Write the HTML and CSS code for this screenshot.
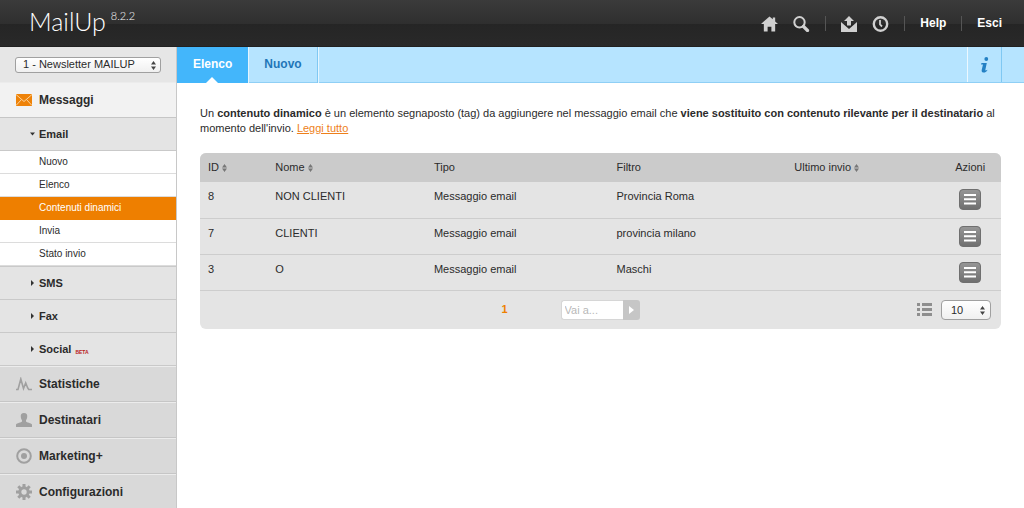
FILE: index.html
```html
<!DOCTYPE html>
<html lang="it">
<head>
<meta charset="utf-8">
<title>MailUp</title>
<link rel="stylesheet" href="styles.css">
</head>
<body>
<svg class="defs" aria-hidden="true">
  <symbol id="sort" viewBox="0 0 5 8"><path d="M0 3.500 2.500 0 5 3.500zM0 4.500h5L2.500 8z"/></symbol>
  <symbol id="updown" viewBox="0 0 5 9"><path d="M0 3.500 2.500 0 5 3.500zM0 5.500h5L2.500 9z"/></symbol>
  <symbol id="menu" viewBox="0 0 12 11"><path d="M0 0h12v2H0zM0 4.300h12v2H0zM0 8.600h12v2H0z"/></symbol>
</svg>
<header class="topbar">
  <div class="logo">MailUp <span class="version">8.2.2</span></div>
  <nav class="tools">
    <a class="tool" href="#" aria-label="Home"><svg width="17" height="16" viewBox="0 0 18 16"><path d="M9 0 0 8h3v8h4v-5h4v5h4V8h3l-3-2.700V1h-2.500v2.100z"/></svg></a>
    <a class="tool" href="#" aria-label="Cerca"><svg width="17" height="16" viewBox="0 0 17 16"><circle cx="6.500" cy="6.300" r="5.200" fill="none" stroke="#d0d0d0" stroke-width="2"/><path d="M10.500 10.500l4 4" stroke="#d0d0d0" stroke-width="3.200" stroke-linecap="round"/></svg></a>
    <span class="sep"></span>
    <a class="tool" href="#" aria-label="Invii"><svg width="16" height="16" viewBox="0 0 16 16"><path d="M8 0 3 5h3v4.500h4V5h3zM0 6l8 7 8-7v10H0z"/></svg></a>
    <a class="tool" href="#" aria-label="Cronologia"><svg width="17" height="16" viewBox="0 0 17 16"><circle cx="8.500" cy="8" r="6.700" fill="none" stroke="#d0d0d0" stroke-width="2.400"/><path d="M8 4v4.500l2 2" fill="none" stroke="#d0d0d0" stroke-width="1.800"/></svg></a>
    <span class="sep"></span>
    <a class="textlink" href="#">Help</a>
    <span class="sep"></span>
    <a class="textlink" href="#">Esci</a>
  </nav>
</header>
<div class="layout">
  <aside class="sidebar">
    <div class="account">
      <span class="picker">
        <select class="select" aria-label="Lista"><option>1 - Newsletter MAILUP</option></select>
        <svg class="updown" width="5" height="9"><use href="#updown"/></svg>
      </span>
    </div>
    <nav>
      <a class="section open" href="#"><svg width="16" height="12" viewBox="0 0 16 12"><path d="M0 0h16v12H0z" fill="#ee8208"/><path d="M0 .5l8 7 8-7M0 11.500l5.500-6M16 11.500l-5.500-6" fill="none" stroke="#fbd39c"/></svg>Messaggi</a>
      <a class="group" href="#"><svg class="caret" width="5" height="6" viewBox="0 0 5 6"><path d="M0 1.500h5L2.500 4.500z"/></svg>Email</a>
      <ul class="items">
        <li><a class="item" href="#">Nuovo</a></li>
        <li><a class="item" href="#">Elenco</a></li>
        <li><a class="item current" href="#" aria-current="page">Contenuti dinamici</a></li>
        <li><a class="item" href="#">Invia</a></li>
        <li><a class="item" href="#">Stato invio</a></li>
      </ul>
      <a class="group" href="#"><svg class="caret" width="5" height="6" viewBox="0 0 5 6"><path d="M1 0v6l3-3z"/></svg>SMS</a>
      <a class="group" href="#"><svg class="caret" width="5" height="6" viewBox="0 0 5 6"><path d="M1 0v6l3-3z"/></svg>Fax</a>
      <a class="group" href="#"><svg class="caret" width="5" height="6" viewBox="0 0 5 6"><path d="M1 0v6l3-3z"/></svg>Social <span class="beta">BETA</span></a>
      <a class="section" href="#"><svg width="16" height="14" viewBox="0 0 16 14"><path d="M0 12.500h2L4.800 2l2.700 9.500L9.700 6l2 5 1 1.500H16" fill="none" stroke="#a0a0a0" stroke-width="1.600"/></svg>Statistiche</a>
      <a class="section" href="#"><svg width="16" height="14" viewBox="0 0 16 14"><path d="M8 0c2.500 0 3.500 1.500 3.200 4-.2 1.700-.8 2.600-1.200 3.200v1.300c.5 1 5.300 1.500 6 3V14H0v-2.500c.7-1.500 5.500-2 6-3V7.200C5.600 6.600 5 5.700 4.800 4 4.500 1.500 5.500 0 8 0z"/></svg>Destinatari</a>
      <a class="section" href="#"><svg width="16" height="16" viewBox="0 0 16 16"><circle cx="8" cy="8" r="6.800" fill="none" stroke="#a0a0a0" stroke-width="2"/><circle cx="8" cy="8" r="3"/></svg>Marketing+</a>
      <a class="section" href="#"><svg width="16" height="16" viewBox="0 0 16 16"><circle cx="8" cy="8" r="4.200" fill="none" stroke="#a0a0a0" stroke-width="3"/><path d="M8 0v3M8 13v3M0 8h3M13 8h3M2.300 2.300l2.200 2.200M11.500 11.500l2.200 2.200M2.300 13.700l2.200-2.200M11.500 4.500l2.200-2.200" stroke="#a0a0a0" stroke-width="3"/></svg>Configurazioni</a>
    </nav>
  </aside>
  <main class="main">
    <nav class="tabs">
      <a class="tab active" href="#" aria-current="page">Elenco</a>
      <a class="tab" href="#">Nuovo</a>
      <a class="info" href="#" aria-label="Informazioni"><svg width="10" height="16" viewBox="0 0 10 16"><circle cx="6.300" cy="2" r="1.900"/><path d="M1.500 6h5.300L5.300 13c0 .8 1 .5 2.200-.3C7 14.500 5 15.800 3.300 15.600c-1.600-.2-1.900-1.200-1.500-3L3 7.400H1z"/></svg></a>
    </nav>
    <div class="content">
      <p class="intro">Un <b>contenuto dinamico</b> è un elemento segnaposto (tag) da aggiungere nel messaggio email che <b>viene sostituito con contenuto rilevante per il destinatario</b> al momento dell'invio. <a class="more" href="#">Leggi tutto</a></p>
      <div class="panel">
        <table class="grid">
          <colgroup><col class="c-id"><col class="c-name"><col class="c-type"><col class="c-filter"><col class="c-last"><col class="c-act"></colgroup>
          <thead>
            <tr><th>ID <svg class="sort" width="5" height="8"><use href="#sort"/></svg></th><th>Nome <svg class="sort" width="5" height="8"><use href="#sort"/></svg></th><th>Tipo</th><th>Filtro</th><th>Ultimo invio <svg class="sort" width="5" height="8"><use href="#sort"/></svg></th><th class="actions">Azioni</th></tr>
          </thead>
          <tbody>
            <tr><td>8</td><td>NON CLIENTI</td><td>Messaggio email</td><td>Provincia Roma</td><td></td><td class="actions"><button class="menu" type="button" aria-label="Azioni"><svg width="12" height="11"><use href="#menu"/></svg></button></td></tr>
            <tr><td>7</td><td>CLIENTI</td><td>Messaggio email</td><td>provincia milano</td><td></td><td class="actions"><button class="menu" type="button" aria-label="Azioni"><svg width="12" height="11"><use href="#menu"/></svg></button></td></tr>
            <tr><td>3</td><td>O</td><td>Messaggio email</td><td>Maschi</td><td></td><td class="actions"><button class="menu" type="button" aria-label="Azioni"><svg width="12" height="11"><use href="#menu"/></svg></button></td></tr>
          </tbody>
        </table>
        <div class="pager">
          <span></span>
          <div class="pages">
            <span class="page">1</span>
            <form class="goto">
              <input class="goto-input" type="text" placeholder="Vai a..." aria-label="Vai a pagina">
              <button class="goto-btn" type="button" aria-label="Vai"><svg width="5" height="8" viewBox="0 0 5 8"><path d="M0 0v8l5-4z"/></svg></button>
            </form>
          </div>
          <div class="sizes">
            <svg class="list" width="15" height="13" viewBox="0 0 15 13"><path d="M0 0h3v3H0zM5 0h10v3H5zM0 5h3v3H0zM5 5h10v3H5zM0 10h3v3H0zM5 10h10v3H5z"/></svg>
            <span class="picker size">
              <select class="select" aria-label="Righe per pagina"><option>10</option></select>
              <svg class="updown" width="5" height="9"><use href="#updown"/></svg>
            </span>
          </div>
        </div>
      </div>
    </div>
  </main>
</div>
</body>
</html>
```
FILE: styles.css
```css
* { box-sizing: border-box; }
body { margin: 0; min-height: 100vh; display: flex; flex-direction: column; background: #fff; color: #2b2b2b; font: 11px/15px "Liberation Sans", Arial, sans-serif; }
a { color: inherit; text-decoration: none; }
svg { flex: none; }
.defs { display: none; }

.topbar { display: flex; justify-content: space-between; align-items: center; height: 47px; padding: 0 22px 0 29px; background: linear-gradient(#3b3b3b, #2f2f2f 50%, #252525 50%, #292929 97%, #1c1c1c); }
.logo { display: flex; align-self: flex-start; gap: 5px; color: #fff; font: 300 25px/43px Lato, sans-serif; }
.version { font-size: 11px; line-height: 32px; }
.tools { display: flex; align-items: center; gap: 15px; color: #fff; font-size: 12px; font-weight: bold; }
.tool { display: flex; fill: #d0d0d0; }
.sep { width: 1px; height: 15px; background: #555; }

.layout { flex: 1; display: flex; }
.sidebar { width: 176px; flex: none; background: #d9d9d9; box-shadow: 1px 0 #c8c8c8; }
.account { display: flex; align-items: center; height: 35px; padding: 0 15px; background: #e6e6e6; }
.picker { position: relative; display: flex; flex: 1; }
.select { appearance: none; width: 100%; height: 16px; margin: 0; padding: 0 16px 2px 7px; border: 1px solid #a0a0a0; border-radius: 3px; background: linear-gradient(#fff, #f0f0f0); color: #2b2b2b; font: 11px/12px "Liberation Sans", Arial, sans-serif; }
.updown { position: absolute; right: 5px; top: 4px; fill: #444; pointer-events: none; }
.section { display: flex; align-items: center; gap: 7px; height: 36px; padding-left: 16px; border-top: 1px solid #ececec; border-bottom: 1px solid #c6c6c6; font-size: 12px; font-weight: bold; fill: #a0a0a0; }
.open { background: #f2f2f2; }
.group { display: flex; align-items: center; gap: 4px; height: 33px; padding-left: 30px; border-bottom: 1px solid #c9c9c9; background: #e4e4e4; font-size: 11px; font-weight: bold; fill: #333; }
.beta { color: #b8201c; font-size: 5px; line-height: 8px; padding-top: 5px; }
.items { margin: 0; padding: 0; list-style: none; background: #fff; border-bottom: 1px solid #c9c9c9; }
.item { display: block; height: 23px; padding-left: 39px; font-size: 10px; line-height: 22px; border-bottom: 1px solid #dcdcdc; }
.current { background: #ee7f00; border-color: #ee7f00; color: #fff; }

.main { flex: 1; min-width: 0; }
.tabs { display: flex; height: 36px; margin-left: 1px; padding-right: 22px; background: #b6e4ff; border-bottom: 1px solid #8fcff5; font-size: 12px; font-weight: bold; line-height: 35px; }
.tab { position: relative; height: 36px; padding: 0 15px 0 16px; color: #1f76b8; border-right: 1px solid #7fc8f3; box-shadow: 1px 0 #e4f5ff; }
.active { background: #43b6fb; color: #fff; border-color: #43b6fb; }
.active::after { content: ""; position: absolute; left: 50%; bottom: 0; margin-left: -6px; border: 6px solid transparent; border-top: 0; border-bottom-color: #fff; }
.info { display: flex; align-items: center; justify-content: center; width: 35px; margin-left: auto; border-left: 1px solid #ecf8ff; border-right: 1px solid #7fc8f3; fill: #2380c4; }
.content { padding: 23px 23px 23px 24px; }
.intro { margin: 0 0 17px; }
.more { color: #ee7f1a; text-decoration: underline; }

.panel { overflow: hidden; border-radius: 6px; background: #e4e4e4; }
.grid { width: 100%; table-layout: fixed; border-collapse: collapse; }
.c-id { width: 8.4%; }
.c-name { width: 19.8%; }
.c-type { width: 22.8%; }
.c-filter { width: 22.2%; }
.c-last { width: 19.1%; }
.c-act { width: 7.7%; }
th { height: 29px; padding: 0 8px; background: #cbcbcb; font-weight: normal; text-align: left; }
td { height: 36px; padding: 7px 8px; border-bottom: 1px solid #cdcdcd; vertical-align: top; }
.sort { fill: #777; vertical-align: -1px; }
th.actions { padding: 0; text-align: center; }
td.actions { padding: 7px 0 0; text-align: center; }
.menu { display: inline-flex; align-items: center; justify-content: center; width: 22px; height: 21px; padding: 0; border: 1px solid #6f6f6f; border-radius: 4px; background: linear-gradient(#969696, #6f6f6f); fill: #fff; vertical-align: top; }
.pager { display: grid; grid-template-columns: 1fr auto 1fr; align-items: center; height: 38px; padding: 0 10px; }
.pages { display: flex; align-items: center; gap: 53px; padding-right: 60px; }
.page { color: #ee7f00; font-weight: bold; }
.goto { display: flex; height: 20px; }
.goto-input { width: 62px; padding: 0 3px; border: 1px solid #d6d6d6; border-right: 0; border-radius: 3px 0 0 3px; background: #fff; font: 11px "Liberation Sans", Arial, sans-serif; }
.goto-input::placeholder { color: #b8b8b8; }
.goto-btn { display: flex; align-items: center; justify-content: center; width: 17px; padding: 0; border: 0; border-radius: 0 3px 3px 0; background: #c6c6c6; fill: #fff; }
.sizes { display: flex; align-items: center; justify-content: flex-end; gap: 9px; }
.list { fill: #8e8e8e; }
.size { flex: none; width: 50px; }
.size .select { height: 20px; padding: 0 16px 0 9px; border-radius: 4px; font-size: 11px; }
.size .updown { top: 6px; right: 6px; }
```
